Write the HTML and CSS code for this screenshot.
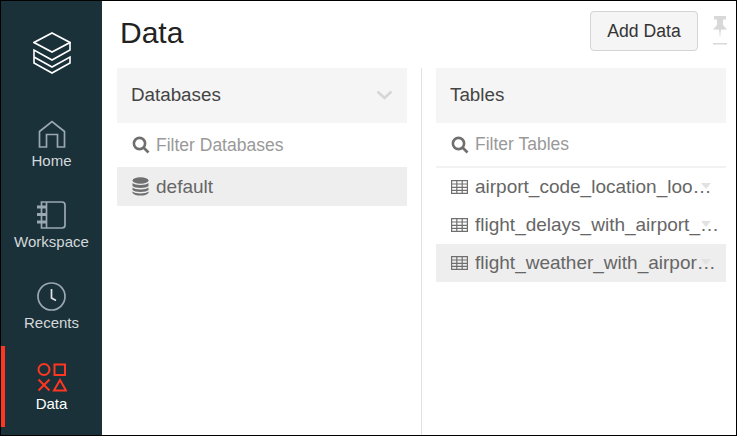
FILE: index.html
```html
<!DOCTYPE html>
<html lang="en">
<head>
  <meta charset="UTF-8" />
  <title>Data</title>
  <link rel="stylesheet" href="styles.css">
</head>
<body>
  <div class="app">
    <nav class="sidebar">
      <div class="logo">
        <svg width="38" height="42" viewBox="0 0 38 42" fill="none" stroke="#fff" stroke-width="1.6">
          <path d="M19 1 L37 10.5 L19 20 L1 10.5 Z" />
          <path d="M37 10.5 V18 L19 28 L1 18 V31 L19 41 L37 31 V25 L19 35 L1 25" />
        </svg>
      </div>
      <a class="nav-item">
        <span class="nav-icon">
          <svg width="28" height="28" viewBox="0 0 28 28" fill="none" stroke="#9aa8b3" stroke-width="1.7">
            <path d="M1.5 27 V11.5 L14 1.5 L26.5 11.5 V27 H19.5 V14.5 H8.5 V27 Z" />
          </svg>
        </span>
        <span>Home</span>
      </a>
      <a class="nav-item">
        <span class="nav-icon">
          <svg width="29" height="28" viewBox="0 0 29 28" fill="none" stroke="#9aa8b3" stroke-width="1.7">
            <path d="M4.5 1 H25 Q28 1 28 4 V24 Q28 27 25 27 H4.5 Z M9.5 1 V27" />
            <path d="M0 6 H9.5 M0 13.5 H9.5 M0 21 H9.5" stroke-width="3" />
          </svg>
        </span>
        <span>Workspace</span>
      </a>
      <a class="nav-item">
        <span class="nav-icon">
          <svg width="29" height="29" viewBox="0 0 29 29" fill="none" stroke="#9aa8b3" stroke-width="1.7">
            <circle cx="14.5" cy="14.5" r="13.5" />
            <path d="M14.5 7 V16 L19 18.5" stroke="#dfe4e7" />
          </svg>
        </span>
        <span>Recents</span>
      </a>
      <a class="nav-item active">
        <span class="nav-icon">
          <svg width="30" height="30" viewBox="0 0 30 30" fill="none" stroke="#ff3621" stroke-width="2">
            <circle cx="7" cy="7.5" r="5.5" />
            <rect x="17.5" y="2.5" width="10.5" height="10.5" />
            <path d="M1.5 17.5 L12.5 28.5 M12.5 17.5 L1.5 28.5" />
            <path d="M23 18 L29 28.5 H17 Z" />
          </svg>
        </span>
        <span>Data</span>
      </a>
    </nav>
    <main class="content">
      <header class="topbar">
        <h1>Data</h1>
        <button class="add-btn">Add Data</button>
        <svg class="pin" width="16" height="29" viewBox="0 0 16 29" fill="#d8d8d8">
          <path d="M2 0 H14 V3.5 H11 V9 L15 13.5 H9 L8 22 L7 13.5 H1 L5 9 V3.5 H2 Z" />
          <rect x="1" y="27" width="14" height="1.5" />
        </svg>
      </header>
      <div class="panels">
        <section class="panel panel-db">
          <div class="panel-head">
            <span>Databases</span>
            <svg width="17" height="10" viewBox="0 0 17 10" fill="none" stroke="#d6d6d6" stroke-width="2.6">
              <path d="M1.5 1.5 L8.5 8 L15.5 1.5" />
            </svg>
          </div>
          <div class="filter">
            <svg class="search" width="18" height="18" viewBox="0 0 18 18" fill="none" stroke="#6f6f6f" stroke-width="2.6">
              <circle cx="7.5" cy="7.5" r="5.6" />
              <path d="M11.5 11.5 L16.5 16.5" />
            </svg>
            <span>Filter Databases</span>
          </div>
          <div class="row row-db selected">
            <svg width="17" height="19" viewBox="0 0 16 19" fill="#6f6f6f">
              <ellipse cx="8" cy="3.5" rx="8" ry="3.3" />
              <path d="M0 6 C2 8.6 14 8.6 16 6 V9 C14 11.6 2 11.6 0 9 Z" />
              <path d="M0 10.5 C2 13 14 13 16 10.5 V13 C14 15.6 2 15.6 0 13 Z" />
              <path d="M0 14.5 C2 17 14 17 16 14.5 V16 C14 19.4 2 19.4 0 16 Z" />
            </svg>
            <span>default</span>
          </div>
        </section>
        <section class="panel panel-tables">
          <div class="panel-head">
            <span>Tables</span>
          </div>
          <div class="filter filter-tables">
            <svg class="search" width="18" height="18" viewBox="0 0 18 18" fill="none" stroke="#6f6f6f" stroke-width="2.6">
              <circle cx="7.5" cy="7.5" r="5.6" />
              <path d="M11.5 11.5 L16.5 16.5" />
            </svg>
            <span>Filter Tables</span>
          </div>
          <div class="row">
            <svg class="tbl" width="17" height="14" viewBox="0 0 17 14" fill="none" stroke="#6f6f6f" stroke-width="1.2">
              <path d="M.6.6 H16.4 V13.4 H.6 Z M.6 4 H16.4 M.6 7.3 H16.4 M.6 10.4 H16.4 M5.8 .6 V13.4 M11.2 .6 V13.4" />
            </svg>
            <span class="name">airport_code_location_loo…</span>
            <i class="caret"></i>
          </div>
          <div class="row">
            <svg class="tbl" width="17" height="14" viewBox="0 0 17 14" fill="none" stroke="#6f6f6f" stroke-width="1.2">
              <path d="M.6.6 H16.4 V13.4 H.6 Z M.6 4 H16.4 M.6 7.3 H16.4 M.6 10.4 H16.4 M5.8 .6 V13.4 M11.2 .6 V13.4" />
            </svg>
            <span class="name">flight_delays_with_airport_…</span>
            <i class="caret"></i>
          </div>
          <div class="row selected">
            <svg class="tbl" width="17" height="14" viewBox="0 0 17 14" fill="none" stroke="#6f6f6f" stroke-width="1.2">
              <path d="M.6.6 H16.4 V13.4 H.6 Z M.6 4 H16.4 M.6 7.3 H16.4 M.6 10.4 H16.4 M5.8 .6 V13.4 M11.2 .6 V13.4" />
            </svg>
            <span class="name">flight_weather_with_airpor…</span>
            <i class="caret"></i>
          </div>
        </section>
      </div>
    </main>
  </div>
</body>
</html>
```

FILE: styles.css
```css
* {
  box-sizing: border-box;
}

body {
  margin: 0;
  font-family: 'Liberation Sans', Arial, sans-serif;
  background-color: #fff;
  color: #333;
}

.app {
  width: 737px;
  height: 436px;
  display: flex;
  border: 1px solid #000;
  overflow: hidden;
}

.sidebar {
  width: 101px;
  flex-shrink: 0;
  background-color: #1b3139;
  display: flex;
  flex-direction: column;
}

.logo {
  height: 102px;
  padding-top: 31px;
  text-align: center;
}

.nav-item {
  height: 81px;
  padding: 16px 4px 0 0;
  display: flex;
  flex-direction: column;
  align-items: center;
  gap: 3px;
  color: #d3d8db;
  font-size: 15px;
  border-left: 4px solid transparent;
}

.nav-icon {
  height: 30px;
  display: flex;
  align-items: center;
}

.nav-item.active {
  border-left-color: #ff3621;
  color: #fff;
}

.content {
  flex: 1;
  min-width: 0;
  display: flex;
  flex-direction: column;
}

.topbar {
  height: 67px;
  padding: 10px 8px 0 18px;
  display: flex;
  align-items: flex-start;
}

.topbar h1 {
  margin: 5px auto 0 0;
  font-size: 30px;
  font-weight: 400;
  color: #222;
}

.add-btn {
  width: 108px;
  height: 40px;
  background-color: #f5f5f5;
  border: 1px solid #d4d4d4;
  border-radius: 4px;
  font-family: inherit;
  font-size: 17.6px;
  color: #333;
}

.pin {
  margin: 5px 0 0 14px;
}

.panels {
  flex: 1;
  display: flex;
  padding-left: 15px;
}

.panel {
  width: 290px;
}

.panel-db {
  width: 305px;
  padding-right: 14px;
  border-right: 1px solid #e2e2e2;
}

.panel-tables {
  margin-left: 14px;
}

.panel-head {
  height: 55px;
  padding: 0 14px 2px;
  display: flex;
  align-items: center;
  justify-content: space-between;
  background-color: #f5f5f5;
  color: #444;
  font-size: 18.8px;
}

.filter {
  height: 44px;
  padding: 0 15px;
  display: flex;
  align-items: center;
  gap: 6px;
  color: #999;
  font-size: 17.5px;
}

.filter-tables {
  height: 45px;
  border-bottom: 2px solid #f2f2f2;
}

.row {
  height: 38px;
  padding: 0 15px;
  display: flex;
  align-items: center;
  gap: 7px;
  position: relative;
  color: #666;
  font-size: 19px;
}

.row-db {
  height: 39px;
}

.row.selected {
  background-color: #eee;
}

.name {
  white-space: nowrap;
}

.tbl {
  flex-shrink: 0;
}

.caret {
  position: absolute;
  right: 15px;
  top: 15px;
  border-left: 5px solid transparent;
  border-right: 5px solid transparent;
  border-top: 6px solid #e2e2e2;
}
```
